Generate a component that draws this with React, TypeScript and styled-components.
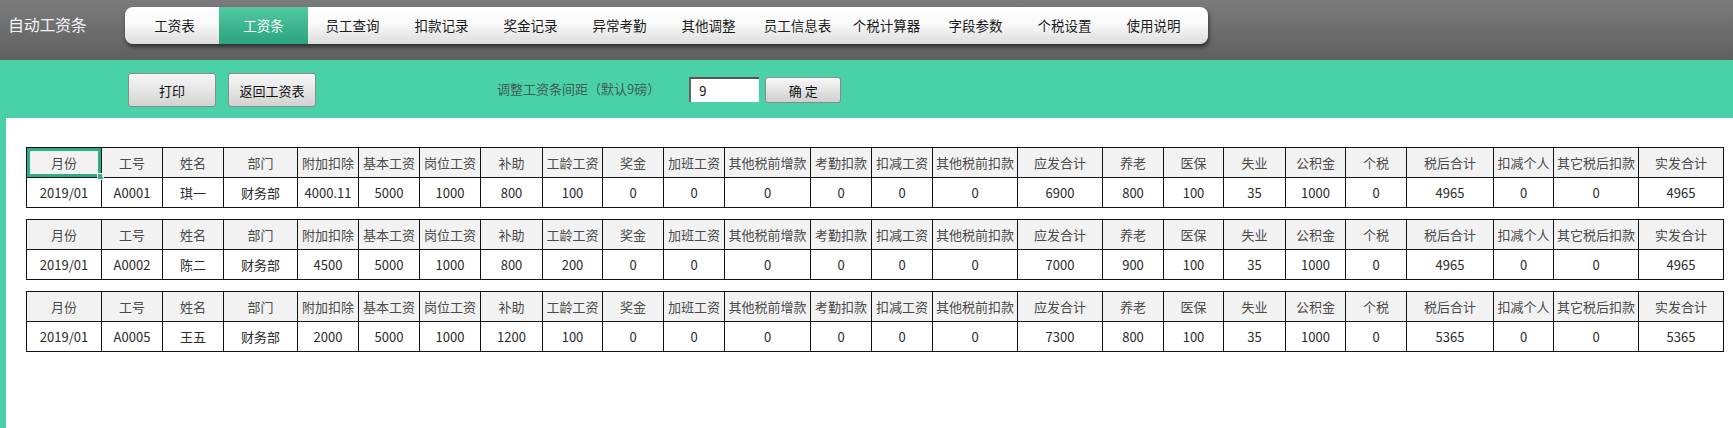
import React from "react";
import styled, { createGlobalStyle } from "styled-components";

const GlobalStyle = createGlobalStyle`
    html, body {
        margin: 0;
        padding: 0;
        background: #4bd1a8;
    }
    body {
        font-family: "Noto Sans CJK SC", "Noto Sans", sans-serif;
        width: 1733px;
        height: 428px;
        overflow: hidden;
    }
    * {
        box-sizing: border-box;
    }
`;

const tabs = [
    "工资表",
    "工资条",
    "员工查询",
    "扣款记录",
    "奖金记录",
    "异常考勤",
    "其他调整",
    "员工信息表",
    "个税计算器",
    "字段参数",
    "个税设置",
    "使用说明",
];

const columns: [string, number][] = [
    ["月份", 75],
    ["工号", 61],
    ["姓名", 61],
    ["部门", 74],
    ["附加扣除", 61],
    ["基本工资", 61],
    ["岗位工资", 61],
    ["补助", 62],
    ["工龄工资", 60],
    ["奖金", 61],
    ["加班工资", 61],
    ["其他税前增款", 86],
    ["考勤扣款", 61],
    ["扣减工资", 61],
    ["其他税前扣款", 85],
    ["应发合计", 85],
    ["养老", 61],
    ["医保", 60],
    ["失业", 62],
    ["公积金", 60],
    ["个税", 61],
    ["税后合计", 87],
    ["扣减个人", 60],
    ["其它税后扣款", 85],
    ["实发合计", 85],
];

const rows = [
    ["2019/01", "A0001", "琪一", "财务部", "4000.11", "5000", "1000", "800", "100", "0", "0", "0", "0", "0", "0", "6900", "800", "100", "35", "1000", "0", "4965", "0", "0", "4965"],
    ["2019/01", "A0002", "陈二", "财务部", "4500", "5000", "1000", "800", "200", "0", "0", "0", "0", "0", "0", "7000", "900", "100", "35", "1000", "0", "4965", "0", "0", "4965"],
    ["2019/01", "A0005", "王五", "财务部", "2000", "5000", "1000", "1200", "100", "0", "0", "0", "0", "0", "0", "7300", "800", "100", "35", "1000", "0", "5365", "0", "0", "5365"],
];

const App = () => {
    return (
        <>
            <GlobalStyle />
            <Header>
                <Title>自动工资条</Title>
                <Nav>
                    {tabs.map((t) => (
                        <Tab key={t} $active={t === "工资条"}>
                            {t}
                        </Tab>
                    ))}
                </Nav>
            </Header>
            <Toolbar>
                <GreyButton>打印</GreyButton>
                <GreyButton>返回工资表</GreyButton>
                <SpacingLabel>调整工资条间距（默认9磅）</SpacingLabel>
                <SpacingInput defaultValue="9" />
                <ConfirmButton>确 定</ConfirmButton>
            </Toolbar>
            <Content>
                {rows.map((row, i) => (
                    <Slip key={row[1]}>
                        <colgroup>
                            {columns.map(([name, w]) => (
                                <col key={name} style={{ width: w }} />
                            ))}
                        </colgroup>
                        <tbody>
                            <tr>
                                {columns.map(([name], j) => (
                                    <HeadCell key={name} $selected={i === 0 && j === 0}>
                                        {name}
                                    </HeadCell>
                                ))}
                            </tr>
                            <tr>
                                {row.map((v, j) => (
                                    <DataCell key={j}>{v}</DataCell>
                                ))}
                            </tr>
                        </tbody>
                    </Slip>
                ))}
            </Content>
        </>
    );
};

export default App;

const Header = styled.div`
    height: 60px;
    display: flex;
    align-items: flex-start;
    padding-top: 7px;
    background: linear-gradient(to bottom, #7b7b7b, #5f5f5f);
`;

const Title = styled.div`
    width: 125px;
    padding-left: 8px;
    height: 37px;
    line-height: 35px;
    font-size: 16px;
    color: #f2f2f2;
    letter-spacing: -0.3px;
`;

const Nav = styled.div`
    display: flex;
    height: 37px;
    padding: 0 10px 0 5px;
    border-radius: 8px;
    background: linear-gradient(to bottom, #ffffff 0%, #fafafa 45%, #dcdcdc 100%);
    box-shadow: 1px 3px 4px rgba(0, 0, 0, 0.55);
`;

const Tab = styled.div<{ $active?: boolean }>`
    width: 89px;
    height: 37px;
    line-height: 36px;
    text-align: center;
    font-size: 13.5px;
    color: ${(p) => (p.$active ? "#ffffff" : "#1a1a1a")};
    background: ${(p) =>
        p.$active ? "linear-gradient(to bottom, #52c9a3, #2aa47c)" : "transparent"};
`;

const Toolbar = styled.div`
    height: 58px;
    display: flex;
    align-items: flex-start;
    padding: 13px 0 0 128px;
    background: #4bd1a8;
`;

const GreyButton = styled.button`
    width: 88px;
    height: 34px;
    margin-right: 12px;
    padding: 0;
    font-family: inherit;
    font-size: 13px;
    color: #111;
    border: 1px solid #8a8a8a;
    border-radius: 3px;
    background: linear-gradient(to bottom, #f7f7f7, #e6e6e6 50%, #d2d2d2);
    box-shadow: inset 0 1px 0 #ffffff;
`;

const SpacingLabel = styled.div`
    margin-left: 169px;
    height: 34px;
    line-height: 32px;
    font-size: 13px;
    color: #3f5e55;
`;

const SpacingInput = styled.input`
    margin: 4px 0 0 29px;
    width: 70px;
    height: 25px;
    padding: 0 0 0 8px;
    font-family: inherit;
    font-size: 13px;
    color: #111;
    border: none;
    border-top: 2px solid #555;
    border-left: 2px solid #666;
    background: #ffffff;
    outline: none;
`;

const ConfirmButton = styled.button`
    margin: 4px 0 0 6px;
    width: 76px;
    height: 26px;
    padding: 0;
    font-family: inherit;
    font-size: 13px;
    color: #111;
    border: 1px solid #8a8a8a;
    border-radius: 3px;
    background: linear-gradient(to bottom, #f7f7f7, #e4e4e4 50%, #d0d0d0);
`;

const Content = styled.div`
    margin-left: 6px;
    height: 310px;
    background: #ffffff;
    padding: 29px 0 0 20px;
    display: flex;
    flex-direction: column;
    gap: 11px;
`;

const Slip = styled.table`
    width: 1697px;
    table-layout: fixed;
    border-collapse: collapse;
    font-size: 13px;
`;

const HeadCell = styled.td<{ $selected?: boolean }>`
    position: relative;
    height: 30px;
    padding: 0;
    text-align: center;
    white-space: nowrap;
    overflow: visible;
    color: #4a4a4a;
    background: #f2f2f2;
    border: 1px solid #111;
    ${(p) =>
        p.$selected &&
        `
        box-shadow: inset 0 0 0 3px #2fae85;
        &::after {
            content: "";
            position: absolute;
            right: -3px;
            bottom: -3px;
            width: 5px;
            height: 5px;
            background: #2fae85;
            border: 1px solid #ffffff;
        }
    `}
`;

const DataCell = styled.td`
    height: 30px;
    padding: 0;
    text-align: center;
    white-space: nowrap;
    color: #2a2a2a;
    background: #ffffff;
    border: 1px solid #111;
`;
